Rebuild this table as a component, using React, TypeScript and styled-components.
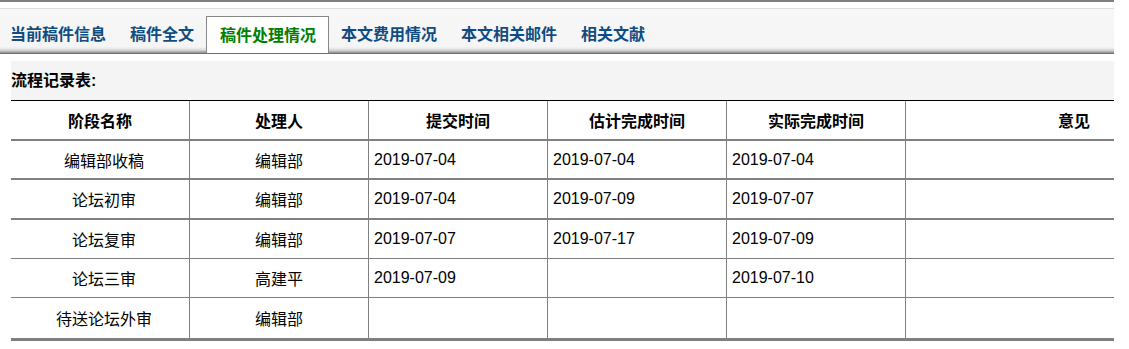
import React from 'react';
import styled, { createGlobalStyle } from 'styled-components';

interface StageRow {
    stage: string;
    handler: string;
    submitted: string;
    estimated: string;
    finished: string;
    opinion: string;
}

const tabs = ['当前稿件信息', '稿件全文', '稿件处理情况', '本文费用情况', '本文相关邮件', '相关文献'];
const activeTab = 2;

const rows: StageRow[] = [
    { stage: '编辑部收稿', handler: '编辑部', submitted: '2019-07-04', estimated: '2019-07-04', finished: '2019-07-04', opinion: '' },
    { stage: '论坛初审', handler: '编辑部', submitted: '2019-07-04', estimated: '2019-07-09', finished: '2019-07-07', opinion: '' },
    { stage: '论坛复审', handler: '编辑部', submitted: '2019-07-07', estimated: '2019-07-17', finished: '2019-07-09', opinion: '' },
    { stage: '论坛三审', handler: '高建平', submitted: '2019-07-09', estimated: '', finished: '2019-07-10', opinion: '' },
    { stage: '待送论坛外审', handler: '编辑部', submitted: '', estimated: '', finished: '', opinion: '' },
];

// 각 행 아래 선 두께가 스크린샷에서 조금씩 달라서 그대로 맞춤
const rowBorders = [2, 2, 1, 1, 3];
const rowHeights = [37, 38, 38, 38, 40];

const App = () => {
    return (
        <>
            <GlobalStyle />
            <Wrapper>
                <TabBar>
                    {tabs.map((tab, i) => (
                        <Tab key={tab} active={i === activeTab}>
                            {tab}
                        </Tab>
                    ))}
                </TabBar>
                <Content>
                    <Heading>流程记录表:</Heading>
                    <HeadRow>
                        <HeadCell>阶段名称</HeadCell>
                        <HeadCell>处理人</HeadCell>
                        <HeadCell>提交时间</HeadCell>
                        <HeadCell>估计完成时间</HeadCell>
                        <HeadCell>实际完成时间</HeadCell>
                        <OpinionHead>意见</OpinionHead>
                    </HeadRow>
                    {rows.map((row, i) => (
                        <BodyRow
                            key={row.stage}
                            borderWidth={rowBorders[i]}
                            rowHeight={rowHeights[i]}
                        >
                            <StageCell>{row.stage}</StageCell>
                            <CenterCell>{row.handler}</CenterCell>
                            <DateCell>{row.submitted}</DateCell>
                            <DateCell>{row.estimated}</DateCell>
                            <DateCell>{row.finished}</DateCell>
                            <DateCell>{row.opinion}</DateCell>
                        </BodyRow>
                    ))}
                </Content>
            </Wrapper>
        </>
    );
};

export default App;

const GlobalStyle = createGlobalStyle`
    body {
        margin: 0;
        background: #ffffff;
        font-family: "Liberation Sans", "Noto Sans CJK SC", sans-serif;
        font-size: 16px;
        color: #000000;
    }
`;

const Wrapper = styled.div`
    width: 1114px;
    border-top: 2px solid #808080;
    padding-top: 6px;
`;

const TabBar = styled.div`
    display: flex;
    align-items: flex-end;
    height: 44px;
    border-top: 1px solid #dddddd;
    border-bottom: 1px solid #7d7d00;
    background: linear-gradient(
        to bottom,
        #f7f7f7 0%,
        #f5f5f5 86%,
        #dcdcdc 93%,
        #8c8c8c 100%
    );
`;

const Tab = styled.div<{ active: boolean }>`
    height: 37px;
    line-height: 37px;
    padding: ${({ active }) => (active ? '0 12px 0 13px' : '0 12px')};
    font-size: 16px;
    font-weight: bold;
    white-space: nowrap;
    color: ${({ active }) => (active ? '#008000' : '#0f4c81')};
    background: ${({ active }) => (active ? '#ffffff' : 'transparent')};
    border: ${({ active }) => (active ? '1px solid #888888' : 'none')};
    border-bottom: none;
    box-sizing: border-box;

    &:first-child {
        padding-left: 10px;
    }
`;

const Content = styled.div`
    padding: 7px 0 0 11px;
`;

const Heading = styled.div`
    height: 39px;
    line-height: 39px;
    background: #f4f4f4;
    font-weight: bold;
    border-bottom: 1px solid #000000;
`;

const rowGrid = `
    display: grid;
    grid-template-columns: 178px 179px 179px 179px 179px 1fr;
`;

const HeadRow = styled.div`
    ${rowGrid}
    height: 38px;
    border-bottom: 2px solid #808080;
`;

const BodyRow = styled.div<{ borderWidth: number; rowHeight: number }>`
    ${rowGrid}
    height: ${({ rowHeight }) => rowHeight}px;
    border-bottom: ${({ borderWidth }) => borderWidth}px solid #808080;
`;

const Cell = styled.div`
    display: flex;
    align-items: center;
    white-space: nowrap;
    & + & {
        border-left: 1px solid #808080;
    }
`;

const HeadCell = styled(Cell)`
    justify-content: center;
    font-weight: bold;
`;

const OpinionHead = styled(HeadCell)`
    justify-content: flex-end;
    padding-right: 24px;
`;

const CenterCell = styled(Cell)`
    justify-content: center;
`;

const StageCell = styled(CenterCell)`
    padding-left: 8px;
`;

const DateCell = styled(Cell)`
    padding-left: 5px;
`;
